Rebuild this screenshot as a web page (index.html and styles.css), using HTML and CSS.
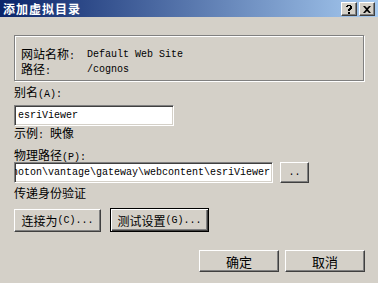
FILE: index.html
```html
<!DOCTYPE html>
<html lang="zh-CN">
<head>
    <meta charset="UTF-8">
    <title>添加虚拟目录</title>
    <link rel="stylesheet" href="styles.css">
</head>
<body>
    <div class="window">
        <div class="titlebar">
            <span class="title">添加虚拟目录</span>
            <div class="caption-buttons">
                <div class="cap-btn">
                    <svg width="8" height="9" viewBox="0 0 8 9">
                        <path d="M1 1h1V0h4v1h1v3H6v1H5v1H3V4h1V3h1V1H3v1H1z M3 7h2v2H3z" fill="#000"/>
                    </svg>
                </div>
                <div class="cap-btn">
                    <svg width="8" height="7" viewBox="0 0 8 7">
                        <path d="M0 0h2l2 2 2-2h2L5 3.5 8 7H6L4 5 2 7H0l3-3.5z" fill="#000"/>
                    </svg>
                </div>
            </div>
        </div>

        <div class="content">
            <div class="group">
                <div class="info-row">
                    <span class="info-label">网站名称<span class="en">:</span></span>
                    <span class="en">Default Web Site</span>
                </div>
                <div class="info-row">
                    <span class="info-label">路径<span class="en">:</span></span>
                    <span class="en">/cognos</span>
                </div>
            </div>

            <div class="label label-alias">别名<span class="en">(A):</span></div>
            <div class="textbox alias-box"><span class="en">esriViewer</span></div>
            <div class="label">示例<span class="en">: </span>映像</div>

            <div class="label label-path">物理路径<span class="en">(P):</span></div>
            <div class="path-row">
                <div class="textbox path-box"><span class="en">C:\Program Files\photon\vantage\gateway\webcontent\esriViewer</span></div>
                <div class="button browse"><span class="en">..</span></div>
            </div>
            <div class="label label-auth">传递身份验证</div>

            <div class="button-row">
                <div class="button connect">连接为<span class="en">(C)...</span></div>
                <div class="button default test">测试设置<span class="en">(G)...</span></div>
            </div>

            <div class="dialog-row">
                <div class="button ok">确定</div>
                <div class="button cancel">取消</div>
            </div>
        </div>
    </div>
</body>
</html>
```

FILE: styles.css
```css
body {
    margin: 0;
    padding: 0;
    font-family: "Noto Sans CJK SC", sans-serif;
    font-size: 12px;
    color: #000;
}

.window {
    width: 378px;
    height: 283px;
    background-color: #d4d0c8;
    overflow: hidden;
}

/* title bar */
.titlebar {
    height: 17px;
    display: flex;
    align-items: center;
    justify-content: space-between;
    padding: 0 3px;
    background: linear-gradient(to right, #0a246a, #a6caf0);
}

.title {
    color: #fff;
    font-weight: bold;
    font-size: 12px;
    letter-spacing: 1px;
    line-height: 17px;
}

.caption-buttons {
    display: flex;
    gap: 2px;
    margin-top: 1px;
}

.cap-btn {
    width: 16px;
    height: 14px;
    box-sizing: border-box;
    display: flex;
    align-items: center;
    justify-content: center;
    background-color: #d4d0c8;
    border: 1px solid;
    border-color: #fff #404040 #404040 #fff;
    box-shadow: inset -1px -1px 0 #808080;
}

/* body */
.content {
    padding: 0 13px 0 14px;
}

.en {
    font-family: "Liberation Mono", monospace;
    font-size: 10px;
    white-space: pre;
}

.group {
    margin-top: 18px;
    margin-right: 1px;
    height: 46px;
    box-sizing: border-box;
    padding: 11px 0 0 6px;
    border: 1px solid #808080;
    box-shadow: inset 1px 1px 0 #fff, 1px 1px 0 #fff;
}

.info-row {
    display: flex;
    align-items: center;
    line-height: 15px;
    height: 15px;
}

.info-label {
    width: 66px;
}

.label {
    line-height: 14px;
    height: 14px;
}

.label-alias {
    margin-top: 4px;
}

.label-path {
    margin-top: 8px;
}

.label-auth {
    margin-top: 3px;
}

.textbox {
    box-sizing: border-box;
    height: 21px;
    background-color: #fff;
    border: 1px solid;
    border-color: #808080 #fff #fff #808080;
    box-shadow: inset 1px 1px 0 #404040, inset -1px -1px 0 #d4d0c8;
    display: flex;
    align-items: center;
    padding: 0 3px;
    white-space: nowrap;
    overflow: hidden;
}

.alias-box {
    width: 160px;
    margin-top: 6px;
}

.path-row {
    display: flex;
    gap: 7px;
}

.path-box {
    width: 259px;
    justify-content: flex-end;
    padding: 0 2px 0 0;
}

.path-box .en {
    flex-shrink: 0;
}

.button {
    box-sizing: border-box;
    display: flex;
    align-items: center;
    justify-content: center;
    background-color: #d4d0c8;
    border: 1px solid;
    border-color: #fff #404040 #404040 #fff;
    box-shadow: inset -1px -1px 0 #808080;
    white-space: nowrap;
}

.button.default {
    border-color: #000;
    box-shadow: inset 1px 1px 0 #fff, inset -1px -1px 0 #404040, inset -2px -2px 0 #808080;
}

.browse {
    width: 29px;
    height: 21px;
}

.button-row {
    display: flex;
    gap: 9px;
    margin-top: 9px;
}

.connect {
    width: 87px;
    height: 23px;
}

.test {
    width: 99px;
    height: 24px;
    margin-top: -1px;
}

.dialog-row {
    display: flex;
    justify-content: flex-end;
    gap: 6px;
    margin-top: 18px;
}

.ok,
.cancel {
    width: 80px;
    height: 22px;
    font-size: 13px;
}
```
